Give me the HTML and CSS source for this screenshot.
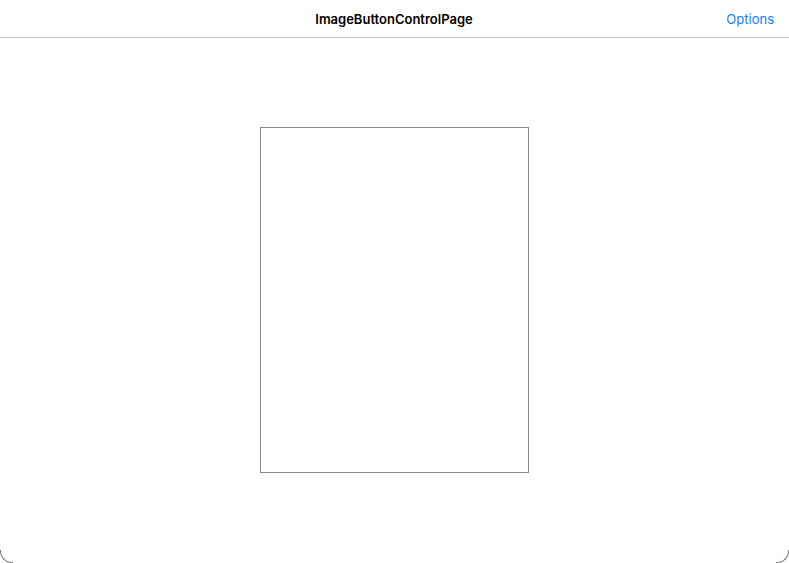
FILE: index.html
```html
<!DOCTYPE html>
<html>
<head>
<meta charset="utf-8">
<link rel="stylesheet" href="styles.css">
</head>
<body>
<div class="screen">
  <header class="navbar">
    <div class="title">ImageButtonControlPage</div>
    <a class="options">Options</a>
  </header>
  <main class="content">
    <div class="image-button"></div>
  </main>
  <span class="corner corner-left"></span>
  <span class="corner corner-right"></span>
</div>
</body>
</html>
```
FILE: styles.css
```css
html, body {
  margin: 0;
  padding: 0;
  background: #fff;
}
.screen {
  position: relative;
  width: 789px;
  height: 563px;
  overflow: hidden;
  font-family: Inter, "Liberation Sans", Arial, sans-serif;
}
.navbar {
  position: relative;
  height: 37px;
  border-bottom: 1px solid #c4c4c6;
  display: flex;
  align-items: center;
  justify-content: center;
}
.title {
  font-size: 13px;
  font-weight: 600;
  color: #000;
  letter-spacing: 0;
  padding-right: 1px;
}
.options {
  position: absolute;
  right: 15px;
  top: 11px;
  font-size: 13px;
  color: #147efb;
}
.content {
  display: flex;
  justify-content: center;
  padding-top: 89px;
  padding-right: 1px;
}
.image-button {
  width: 267px;
  height: 344px;
  border: 1px solid #8a8a8a;
}
.corner {
  position: absolute;
  bottom: 0;
  width: 12px;
  height: 12px;
  border: 0 solid #777;
}
.corner-left {
  left: 0;
  border-left-width: 1px;
  border-bottom-width: 1px;
  border-bottom-left-radius: 12px;
}
.corner-right {
  right: 0;
  border-right-width: 1px;
  border-bottom-width: 1px;
  border-bottom-right-radius: 12px;
}
```
